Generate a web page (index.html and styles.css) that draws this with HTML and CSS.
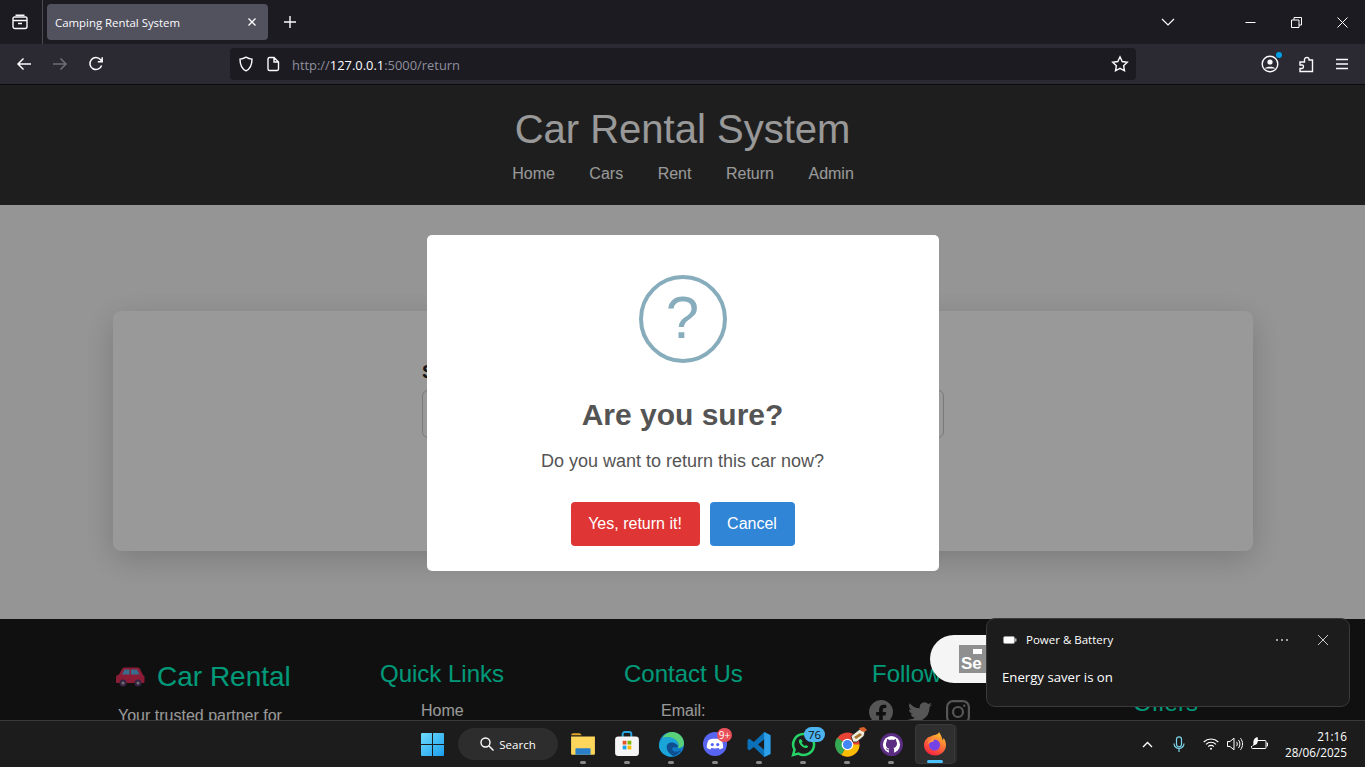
FILE: index.html
```html
<!DOCTYPE html>
<html lang="en">
<head>
    <meta charset="UTF-8">
    <meta name="viewport" content="width=device-width, initial-scale=1.0">
    <title>Camping Rental System</title>
    <link rel="stylesheet" href="styles.css">
</head>
<body>
    <div class="tabbar">
        <div class="tab-tools">
            <svg width="16" height="16" viewBox="0 0 16 16" fill="none" stroke="#fbfbfe" stroke-width="1.4"><path d="M3.5 1.2h9M1 4.5A1.5 1.5 0 0 1 2.500 3h11A1.500 1.500 0 0 1 15 4.500v8a2 2 0 0 1-2 2H3a2 2 0 0 1-2-2zM1 6.500h14M6 9.500h4"/></svg>
        </div>
        <div class="tab">
            <span class="tab-title">Camping Rental System</span>
            <svg width="10" height="10" viewBox="0 0 10 10" stroke="#fbfbfe" stroke-width="1.4"><path d="M1.500 1.500l7 7M8.500 1.500l-7 7"/></svg>
        </div>
        <div class="new-tab">
            <svg width="14" height="14" viewBox="0 0 14 14" stroke="#fbfbfe" stroke-width="1.4"><path d="M7 1v12M1 7h12"/></svg>
        </div>
        <div class="tab-spacer"></div>
        <div class="tab-list">
            <svg width="14" height="8" viewBox="0 0 14 8" fill="none" stroke="#fbfbfe" stroke-width="1.2"><path d="M1 1l6 6 6-6"/></svg>
        </div>
        <div class="win-btn">
            <svg width="11" height="11" viewBox="0 0 11 11" stroke="#fff" stroke-width="1"><path d="M0.500 5.500h10"/></svg>
        </div>
        <div class="win-btn">
            <svg width="11" height="11" viewBox="0 0 11 11" fill="none" stroke="#fff" stroke-width="1"><path d="M0.500 3h7.500v7.500h-7.500zM3 3V0.500h7.500V8H8"/></svg>
        </div>
        <div class="win-btn">
            <svg width="11" height="11" viewBox="0 0 11 11" stroke="#fff" stroke-width="1"><path d="M0.500 0.500l10 10M10.500 0.500l-10 10"/></svg>
        </div>
    </div>

    <div class="toolbar">
        <div class="nav-btns">
            <svg width="16" height="14" viewBox="0 0 16 14" fill="none" stroke="#fbfbfe" stroke-width="1.5"><path d="M15 7H2M7.500 1.500L2 7l5.500 5.500"/></svg>
            <svg width="16" height="14" viewBox="0 0 16 14" fill="none" stroke="#6f6e75" stroke-width="1.5"><path d="M1 7h13M8.500 1.500L14 7l-5.500 5.500"/></svg>
            <svg width="16" height="16" viewBox="0 0 16 16" fill="none" stroke="#fbfbfe" stroke-width="1.5"><path d="M13.600 9.500A6 6 0 1 1 12.600 3.800L14 5.500M14.200 1.200v4.500H9.800"/></svg>
        </div>
        <div class="urlbar">
            <svg width="16" height="16" viewBox="0 0 16 16" fill="none" stroke="#fbfbfe" stroke-width="1.4"><path d="M8 1.200c2 1.200 4 1.800 6 1.900 0 6-1.600 9.900-6 11.700C3.600 13 2 9.100 2 3.100c2-.1 4-.7 6-1.900z"/></svg>
            <svg width="14" height="16" viewBox="0 0 14 16" fill="none" stroke="#fbfbfe" stroke-width="1.4"><path d="M2 3a1.500 1.500 0 0 1 1.500-1.500H8L12.500 6v7a1.500 1.500 0 0 1-1.500 1.500H3.500A1.500 1.500 0 0 1 2 13zM8 1.500V6h4.500"/></svg>
            <span class="url"><span class="url-dim">http://</span><span class="url-host">127.0.0.1</span><span class="url-dim">:5000/return</span></span>
            <svg class="url-star" width="18" height="18" viewBox="0 0 18 18" fill="none" stroke="#fbfbfe" stroke-width="1.4"><path d="M9 1.800l2.200 4.700 5.100.7-3.700 3.500.9 5.100L9 13.400l-4.500 2.400.9-5.100L1.700 7.200l5.100-.7z"/></svg>
        </div>
        <div class="tool-icons">
            <div class="account">
                <svg width="18" height="18" viewBox="0 0 18 18" fill="none" stroke="#fbfbfe" stroke-width="1.4"><circle cx="9" cy="9" r="7.800"/><circle cx="9" cy="7" r="2.600" fill="#fbfbfe" stroke="none"/><path d="M3.800 13.500c1-2.200 9.400-2.200 10.400 0" fill="#fbfbfe" stroke="none"/></svg>
                <span class="account-dot"></span>
            </div>
            <svg width="16" height="17" viewBox="0 0 16 17" fill="none" stroke="#fbfbfe" stroke-width="1.4"><path d="M9 1.500c1.500 0 2.200 1 2 2.500h3.500v11.500H2v-3h2c2 0 2-3.500 0-3.500H2V6h4.500V3.500C6.500 2.200 7.500 1.500 9 1.500z"/></svg>
            <svg class="menu-icon" width="14" height="12" viewBox="0 0 14 12" stroke="#fbfbfe" stroke-width="1.3"><path d="M1 1.500h12M1 6h12M1 10.500h12"/></svg>
        </div>
    </div>

    <div class="page">
        <div class="navbar">
            <h1>Car Rental System</h1>
            <div class="nav-links">
                <a>Home</a>
                <a>Cars</a>
                <a>Rent</a>
                <a>Return</a>
                <a>Admin</a>
            </div>
        </div>

        <div class="main">
            <div class="return-card">
                <label class="return-label">Select Car</label>
                <div class="return-select"></div>
            </div>
        </div>

        <div class="footer">
            <div class="foot-brand">
                <h2 class="foot-logo">
                    <svg width="30" height="20" viewBox="0 0 30 20"><path fill="#e8305a" d="M1 10c0-1 1-2 3-2.500L7 2c.5-1 1.500-1.500 3-1.500h12c1.500 0 2.500.5 3 1.500l3 6c1 .5 1.500 1.500 1.500 2.500v4c0 1-.5 1.500-1.500 1.500H2c-.7 0-1-.5-1-1.500z"/><path fill="#62b4ea" d="M9.500 2.500h5v5h-7.500zM16 2.500h6l2.500 5H16z"/><circle cx="8" cy="16" r="3.500" fill="#5a3a6e"/><circle cx="23" cy="16" r="3.500" fill="#5a3a6e"/><circle cx="8" cy="16" r="1.500" fill="#bbb"/><circle cx="23" cy="16" r="1.500" fill="#bbb"/></svg>
                    <span>Car Rental</span>
                </h2>
                <p>Your trusted partner for</p>
            </div>
            <div class="foot-links">
                <h3>Quick Links</h3>
                <p>Home</p>
            </div>
            <div class="foot-contact">
                <h3>Contact Us</h3>
                <p>Email:</p>
            </div>
            <div class="foot-social">
                <h3>Follow Us</h3>
                <div class="social-icons">
                    <svg width="24" height="24" viewBox="0 0 24 24" fill="#8f8f8f"><path d="M24 12a12 12 0 1 0-13.900 11.900v-8.400H7.100V12h3V9.400c0-3 1.800-4.700 4.500-4.700 1.300 0 2.700.2 2.700.2v3h-1.500c-1.500 0-2 .9-2 1.900V12h3.300l-.5 3.500h-2.800v8.400A12 12 0 0 0 24 12z"/></svg>
                    <svg width="24" height="24" viewBox="0 0 24 24" fill="#8f8f8f"><path d="M24 4.600a9.800 9.800 0 0 1-2.800.8 4.900 4.900 0 0 0 2.100-2.700c-.9.600-2 1-3.100 1.200A4.900 4.900 0 0 0 11.800 8.300 14 14 0 0 1 1.700 3.200a4.900 4.900 0 0 0 1.500 6.600c-.8 0-1.600-.2-2.200-.6 0 2.400 1.700 4.400 3.900 4.900-.7.200-1.500.2-2.200.1a4.900 4.900 0 0 0 4.600 3.400A9.900 9.900 0 0 1 0 19.500a14 14 0 0 0 21.500-12.400c1-.7 1.800-1.600 2.500-2.500z"/></svg>
                    <svg width="24" height="24" viewBox="0 0 24 24" fill="none" stroke="#8f8f8f" stroke-width="2.200"><rect x="1.100" y="1.100" width="21.800" height="21.800" rx="6"/><circle cx="12" cy="12" r="5"/><circle cx="18.300" cy="5.700" r="1.200" fill="#8f8f8f" stroke="none"/></svg>
                </div>
            </div>
            <div class="foot-offers">
                <h3>Offers</h3>
            </div>
        </div>

        <div class="overlay">
            <div class="modal">
                <div class="modal-icon">?</div>
                <h2>Are you sure?</h2>
                <p>Do you want to return this car now?</p>
                <div class="modal-actions">
                    <button class="btn-yes">Yes, return it!</button>
                    <button class="btn-cancel">Cancel</button>
                </div>
            </div>
        </div>

        <div class="se-pill"><span class="se-box"><span class="se-cam"></span>Se</span></div>

        <div class="toast">
            <div class="toast-head">
                <svg width="14" height="8" viewBox="0 0 14 8"><rect x="0.500" y="0.500" width="11" height="7" rx="1.500" fill="#fff" stroke="#999"/><rect x="12" y="2.500" width="1.500" height="3" fill="#bbb"/></svg>
                <span class="toast-app">Power &amp; Battery</span>
                <span class="toast-more">
                    <i></i><i></i><i></i>
                </span>
                <svg width="10" height="10" viewBox="0 0 10 10" stroke="#ccc" stroke-width="1"><path d="M0 0l10 10M10 0L0 10"/></svg>
            </div>
            <div class="toast-body">Energy saver is on</div>
        </div>
    </div>

    <div class="taskbar">
        <div class="task-center">
            <svg class="task-win" width="23" height="23" viewBox="0 0 22 22"><defs><linearGradient id="wg" x1="0" y1="0" x2="1" y2="1"><stop offset="0" stop-color="#6fdcfb"/><stop offset="1" stop-color="#1a9ff0"/></linearGradient></defs><path fill="url(#wg)" d="M0 1a1 1 0 0 1 1-1h9.500v10.500H0zM11.500 0H21a1 1 0 0 1 1 1v9.500H11.500zM0 11.500h10.500V22H1a1 1 0 0 1-1-1zM11.500 11.500H22V21a1 1 0 0 1-1 1h-9.500z"/></svg>
            <div class="task-search">
                <svg width="14" height="14" viewBox="0 0 14 14" fill="none" stroke="#fff" stroke-width="1.4"><circle cx="5.500" cy="5.500" r="4.500"/><path d="M9 9l4.500 4.500"/></svg>
                <span>Search</span>
            </div>
            <div class="task-app">
                <svg width="26" height="24" viewBox="0 0 24 22"><path fill="#e0a526" d="M1 3a2 2 0 0 1 2-2h6l2 2h-10z"/><path fill="#ffd65c" d="M1 4h22v16a1 1 0 0 1-1 1H2a1 1 0 0 1-1-1z"/><path fill="#2a7fc9" d="M6 15h12a1 1 0 0 1 1 1v5H5v-5a1 1 0 0 1 1-1z"/></svg>
            </div>
            <div class="task-app">
                <svg width="24" height="26" viewBox="0 0 22 24"><path fill="none" stroke="#27a6e0" stroke-width="1.800" d="M7 6V3a2 2 0 0 1 2-2h4a2 2 0 0 1 2 2v3"/><rect y="5" width="22" height="18" rx="3" fill="#f5f5f5"/><rect x="7" y="9" width="3.500" height="3.500" fill="#e8542c"/><rect x="11.500" y="9" width="3.500" height="3.500" fill="#7db900"/><rect x="7" y="13.500" width="3.500" height="3.500" fill="#1ea3e8"/><rect x="11.500" y="13.500" width="3.500" height="3.500" fill="#fdb900"/></svg>
            </div>
            <div class="task-app">
                <svg width="25" height="25" viewBox="0 0 24 24"><circle cx="12" cy="12" r="12" fill="#0f7cc8"/><path fill="#5ad07a" d="M3 6C6 1 10 0 13 0c6 0 11 5 11 11 0 3-3 5-6 4 1-1 1-3 0-5C15 5 8 4 3 6z"/><path fill="#1ba4d8" d="M3 6c5-2 12-1 15 4 .6 1.200.7 2.400.3 3.400-2.300-3.400-6.300-4.400-9.300-2.400C6 13 7 20 14 23c-7 2-13-3-14-9 0-3 1-6 3-8z"/><path fill="#0f4f8f" d="M9 11c3-2 7-1 9.300 2.400-.3 1-1 1.400-1.800 1.600-3-1-5 1-3 3 2 1.500 5 1 8-1-2 3-5 5.500-7.500 6C7 20 6 13 9 11z"/></svg>
            </div>
            <div class="task-app">
                <svg width="24" height="24" viewBox="0 0 22 22"><circle cx="11" cy="11" r="11" fill="#5865f2"/><path fill="#fff" d="M5 7.500c3-1.800 9-1.800 12 0 1.200 2.300 1.600 4.600 1.500 7-1.200.9-2.300 1.300-3.200 1.500l-.9-1.400c-2.200.6-4.600.6-6.800 0l-.9 1.400c-1-.2-2-.6-3.200-1.500-.1-2.400.3-4.700 1.500-7z"/><circle cx="8.500" cy="11.500" r="1.500" fill="#5865f2"/><circle cx="13.500" cy="11.500" r="1.500" fill="#5865f2"/></svg>
                <span class="task-badge badge-red">9+</span>
            </div>
            <div class="task-app">
                <svg width="24" height="25" viewBox="0 0 22 24"><path fill="#0a70b8" d="M16 0l6 3v18l-6 3-10-9.500-4 3L0 16.500v-9L2 6.500l4 3zM16 7l-6 5 6 5z"/><path fill="#2ea0ea" d="M16 0l6 3v18l-6 3z"/></svg>
            </div>
            <div class="task-app">
                <svg width="25" height="25" viewBox="0 0 24 24" fill="none"><path stroke="#25d366" stroke-width="2.400" d="M12 2a10 10 0 0 0-8.600 15L2 22l5.200-1.300A10 10 0 1 0 12 2z"/><path fill="#25d366" d="M8.500 7c-1 .8-1.200 2-.5 3.500 1 2.200 3 4 5.400 4.800 1.500.4 2.700-.2 3.300-1.300l-2.300-1.600-1 1c-1.400-.6-2.500-1.700-3.200-3l1-1L9.800 7z"/></svg>
                <span class="task-badge badge-blue">76</span>
            </div>
            <div class="task-app">
                <svg width="25" height="25" viewBox="0 0 24 24"><circle cx="12" cy="12" r="11.500" fill="#ea4335"/><path fill="#fbbc05" d="M12 12h11.500a11.500 11.500 0 0 1-17.300 10z"/><path fill="#34a853" d="M12 12L6.200 22A11.500 11.500 0 0 1 2 5.500z"/><circle cx="12" cy="12" r="5.600" fill="#fff"/><circle cx="12" cy="12" r="4.400" fill="#4285f4"/></svg>
                <svg class="chrome-mark" width="17" height="16" viewBox="0 0 17 16"><path fill="#f0ece0" stroke="#222" stroke-width="0.800" d="M1 9l9-7 5 2-1 5-7 6H3z"/><path fill="#d9622b" d="M9 1l5-1 3 3-3 2-3-1z"/><path fill="#a8752a" d="M4 10l6-4 2 2-6 4z"/></svg>
            </div>
            <div class="task-app">
                <svg width="23" height="23" viewBox="0 0 22 22"><circle cx="11" cy="11" r="11" fill="#5a2d82"/><circle cx="11" cy="11" r="8.200" fill="#fff"/><path fill="#5a2d82" d="M7 5.500l2 1.300c1.300-.3 2.700-.3 4 0l2-1.300.6 2.500c1 1.300 1 4-.6 5.300-.6.500-1.300.8-2.200.9.500.4.700 1 .7 1.800v3.500a8.500 8.500 0 0 1-5 0V16.500c-1.600.4-2.500-.4-3-1.800l1.500.6c.4.500 1 .6 1.600.4 0-.3.100-.6.400-.8-.9-.1-1.600-.4-2.200-.9C5.400 12.800 5.400 10 6.400 8z"/></svg>
            </div>
            <div class="task-app task-active">
                <svg width="24" height="24" viewBox="0 0 24 24"><defs><linearGradient id="fx" x1="0.800" y1="0" x2="0.300" y2="1"><stop offset="0" stop-color="#ffcb2d"/><stop offset="0.500" stop-color="#ff7139"/><stop offset="1" stop-color="#f5213f"/></linearGradient></defs><path fill="url(#fx)" d="M12 3c-1 0-3 .5-4 1.500C6 4.800 4.500 5.500 4 6.500 2 8 1 10 1 13c0 6 5 10.500 11 10.500S23 19 23 13c0-2.500-.8-5-2.500-7-.1 1-.4 1.800-1 2.400C19 5 17.500 2 16 0c-.2 2-2.500 2.500-4 3z"/><circle cx="11.500" cy="13" r="5.500" fill="#7542e5"/><path fill="#ff9640" d="M5 12c0-3 3-5.500 7-5.500-1 1-1.500 2-1.500 3-2 0-3.500 1-5.500 2.500z"/></svg>
                <span class="active-bar"></span>
            </div>
        </div>
        <div class="tray">
            <svg width="11" height="7" viewBox="0 0 11 7" fill="none" stroke="#fff" stroke-width="1.4"><path d="M1 6l4.500-4.500L10 6"/></svg>
            <svg class="tray-mic" width="12" height="17" viewBox="0 0 12 17" fill="none" stroke="#7ed4ea" stroke-width="1.2"><rect x="3.500" y="0.800" width="5" height="10" rx="2.500"/><path d="M1 7.500a5 5 0 0 0 10 0M6 12.500V16"/></svg>
            <svg class="tray-wifi" width="16" height="12" viewBox="0 0 16 12" fill="none" stroke="#fff" stroke-width="1.1"><path d="M0.700 4a10.500 10.500 0 0 1 14.600 0M3 6.400a7 7 0 0 1 10 0M5.200 8.600a3.800 3.800 0 0 1 5.600 0"/><circle cx="8" cy="10.700" r="1" fill="#fff" stroke="none"/></svg>
            <svg class="tray-vol" width="16" height="14" viewBox="0 0 16 14" fill="none" stroke="#fff" stroke-width="1"><path d="M0.500 4.500h2.500L7 1.200v11.600L3 9.500H.5zM9.500 4.800c1 1.300 1 3.100 0 4.400M11.500 3c1.900 2.400 1.900 5.600 0 8M13.500 1.200c2.700 3.500 2.700 8.100 0 11.600"/></svg>
            <svg class="tray-batt" width="17" height="14" viewBox="0 0 17 14" fill="none" stroke="#fff" stroke-width="1"><path d="M6 3.500h8a1 1 0 0 1 1 1v6a1 1 0 0 1-1 1H1.500a1 1 0 0 1-1-1V9M15.500 6h1v3h-1"/><path fill="#fff" stroke="none" d="M6.500 0C3 1 2 4 2.500 7L1 9.500 3.500 8c3-.2 4-4 3-8z"/></svg>
            <div class="clock">
                <span>21:16</span>
                <span>28/06/2025</span>
            </div>
        </div>
    </div>
</body>
</html>
```

FILE: styles.css
```css
html, body {
    margin: 0;
    padding: 0;
    height: 767px;
    overflow: hidden;
}
body {
    font-family: "Liberation Sans", Arial, sans-serif;
    display: flex;
    flex-direction: column;
    background: #1c1b22;
}
svg {
    display: block;
    flex: none;
}

/* browser chrome */
.tabbar {
    height: 44px;
    background: #1c1b22;
    display: flex;
    align-items: center;
    flex: none;
}
.tab-tools {
    width: 43px;
    height: 44px;
    box-sizing: border-box;
    border-right: 1px solid #4a4a50;
    display: flex;
    align-items: center;
    justify-content: center;
    padding-right: 3px;
}
.tab {
    width: 221px;
    height: 36px;
    margin-left: 4px;
    box-sizing: border-box;
    padding: 0 11px 0 8px;
    background: #52525e;
    border-radius: 4px;
    display: flex;
    align-items: center;
    justify-content: space-between;
}
.tab-title {
    font-family: "Open Sans", sans-serif;
    font-size: 11.4px;
    color: #fbfbfe;
}
.new-tab {
    margin-left: 15px;
}
.tab-spacer {
    flex: 1;
}
.tab-list {
    margin-right: 52px;
}
.win-btn {
    width: 46px;
    display: flex;
    justify-content: center;
}
.toolbar {
    height: 40px;
    background: #2b2a33;
    border-bottom: 1px solid #0c0c0d;
    display: flex;
    align-items: center;
    flex: none;
}
.nav-btns {
    width: 230px;
    box-sizing: border-box;
    padding-left: 16px;
    display: flex;
    align-items: center;
    gap: 20px;
}
.urlbar {
    width: 906px;
    height: 32px;
    box-sizing: border-box;
    padding: 0 7px 0 8px;
    background: #1c1b22;
    border-radius: 4px;
    display: flex;
    align-items: center;
    gap: 12px;
}
.url {
    font-family: "Open Sans", sans-serif;
    font-size: 12.9px;
    position: relative;
    top: 1px;
}
.url-dim {
    color: #8f8f9d;
}
.url-host {
    color: #fbfbfe;
}
.url-star {
    margin-left: auto;
}
.tool-icons {
    flex: 1;
    display: flex;
    align-items: center;
    gap: 19px;
    padding-left: 125px;
}
.menu-icon {
    margin-left: 2px;
}
.account {
    position: relative;
}
.account-dot {
    position: absolute;
    top: -3px;
    right: -3px;
    width: 6px;
    height: 6px;
    border-radius: 50%;
    background: #00a0e8;
}

/* the rental page */
.page {
    height: 635px;
    flex: none;
    position: relative;
    overflow: hidden;
    display: flex;
    flex-direction: column;
    background: #fafafa;
}
.navbar {
    height: 120px;
    flex: none;
    background: #333;
    text-align: center;
    box-sizing: border-box;
    padding-top: 20px;
}
.navbar h1 {
    margin: 0;
    font-size: 40px;
    line-height: 48px;
    font-weight: normal;
    color: #fff;
}
.nav-links {
    margin-top: 12px;
    padding-left: 1px;
    display: flex;
    justify-content: center;
    gap: 34.5px;
    color: #fff;
    font-size: 16px;
    line-height: 18px;
}
.main {
    height: 414px;
    flex: none;
    box-sizing: border-box;
    padding: 106px 112px 0 113px;
    background: #f9f9f9;
}
.return-card {
    height: 240px;
    box-sizing: border-box;
    background: #fff;
    border-radius: 8px;
    box-shadow: 0 8px 32px rgba(0, 0, 0, 0.18);
    padding: 50px 309px 0;
}
.return-label {
    display: block;
    font-size: 19px;
    font-weight: bold;
    color: #222;
    line-height: 22px;
}
.return-select {
    margin-top: 7px;
    height: 46px;
    border: 1px solid #ccc;
    border-radius: 6px;
}
.footer {
    flex: 1;
    background: #1c1c1c;
    display: flex;
    padding-top: 41px;
    color: #fff;
    font-size: 16px;
}
.footer h3 {
    margin: 0;
    font-size: 24px;
    line-height: 28px;
    font-weight: normal;
    color: #00ffcc;
}
.footer p {
    margin: 0;
    line-height: 18px;
}
.foot-brand {
    width: 265px;
    margin-left: 115px;
}
.foot-logo {
    margin: 1px 0 0;
    display: flex;
    align-items: center;
    gap: 12px;
    font-size: 28px;
    line-height: 32px;
    font-weight: normal;
    color: #00ffcc;
}
.foot-brand p {
    margin: 14px 0 0 3px;
}
.foot-links {
    width: 244px;
    flex: none;
}
.foot-links p {
    margin: 14px 0 0 41px;
}
.foot-contact {
    width: 248px;
    flex: none;
}
.foot-contact p {
    margin: 14px 0 0 37px;
}
.foot-social {
    width: 263px;
    flex: none;
    white-space: nowrap;
}
.social-icons {
    display: flex;
    gap: 14.5px;
    margin: 12px 0 0 -3px;
}
.foot-offers {
    padding-top: 29px;
    margin-left: -2px;
}

/* dialog */
.overlay {
    position: absolute;
    left: 0;
    right: 0;
    top: 0;
    bottom: 0;
    background: rgba(0, 0, 0, 0.4);
    display: flex;
    justify-content: center;
    align-items: flex-start;
}
.modal {
    width: 512px;
    height: 336px;
    margin-top: 150px;
    box-sizing: border-box;
    padding-top: 40px;
    background: #fff;
    border-radius: 5px;
    text-align: center;
}
.modal-icon {
    width: 88px;
    height: 88px;
    box-sizing: border-box;
    margin: 0 auto;
    border: 4px solid #87adbd;
    border-radius: 50%;
    color: #87adbd;
    font-size: 60px;
    line-height: 77px;
}
.modal h2 {
    margin: 29px 0 0;
    font-size: 30px;
    line-height: 46px;
    color: #545454;
}
.modal p {
    margin: 10px 0 0;
    font-size: 18px;
    line-height: 26px;
    color: #545454;
}
.modal-actions {
    margin-top: 28px;
    display: flex;
    justify-content: center;
    gap: 10px;
}
.modal-actions button {
    height: 44px;
    border: none;
    border-radius: 4px;
    padding: 0;
    font-family: inherit;
    font-size: 16px;
    color: #fff;
}
.btn-yes {
    width: 129px;
    background: #e03535;
}
.btn-cancel {
    width: 85px;
    background: #3085d6;
}

/* recorder pill, sits over the dialog backdrop */
.se-pill {
    position: absolute;
    left: 930px;
    top: 550px;
    width: 120px;
    height: 48px;
    border-radius: 24px;
    background: #f5f5f5;
    box-sizing: border-box;
    padding: 10px 0 0 29px;
}
.se-box {
    display: block;
    position: relative;
    width: 40px;
    height: 28px;
    background: #8f8f8f;
    color: #fff;
    font-weight: bold;
    font-size: 17px;
    line-height: 38px;
    overflow: hidden;
    padding-left: 2px;
    box-sizing: border-box;
}
.se-cam {
    position: absolute;
    top: 4px;
    left: 14px;
    width: 9px;
    height: 5px;
    background: #fff;
}

/* windows notification */
.toast {
    position: absolute;
    left: 986px;
    top: 533px;
    width: 364px;
    height: 89px;
    box-sizing: border-box;
    padding: 0 21px 0 15px;
    background: #1c1c1c;
    border: 1px solid #3a3a3a;
    border-radius: 9px;
    font-family: "Open Sans", sans-serif;
    color: #fff;
}
.toast-head {
    display: flex;
    align-items: center;
    height: 41px;
    font-size: 11.5px;
}
.toast-head svg:first-child {
    margin-left: 1px;
}
.toast-app {
    margin-left: 9px;
}
.toast-more {
    margin-left: auto;
    margin-right: 30px;
    display: flex;
    gap: 3px;
}
.toast-more i {
    width: 2px;
    height: 2px;
    border-radius: 50%;
    background: #ccc;
}
.toast-body {
    margin-top: 8px;
    font-size: 13.2px;
}

/* taskbar */
.taskbar {
    height: 47px;
    flex: none;
    box-sizing: border-box;
    border-top: 1px solid #3a3a3a;
    background: #1c1c1c;
    position: relative;
    display: flex;
    align-items: center;
}
.task-center {
    margin-left: 421px;
    display: flex;
    align-items: center;
}
.task-win {
    margin-right: 14px;
}
.task-search {
    width: 100px;
    height: 32px;
    border-radius: 16px;
    background: #2d2d2d;
    display: flex;
    align-items: center;
    justify-content: center;
    gap: 5px;
    margin-right: 3px;
    color: #fff;
    font-family: "Open Sans", sans-serif;
    font-size: 11.5px;
}
.task-app {
    width: 44px;
    height: 46px;
    position: relative;
    display: flex;
    align-items: center;
    justify-content: center;
}
.task-app::after {
    content: "";
    position: absolute;
    bottom: 3px;
    left: 19px;
    width: 6px;
    height: 3px;
    border-radius: 2px;
    background: #8a8a8a;
}
.task-active {
    width: 40px;
    height: 40px;
    background: #2f2f2f;
    border: 1px solid #3a3a3a;
    border-radius: 4px;
    box-sizing: border-box;
    margin-left: 2px;
    box-shadow: 3px 0 0 -1px #2a2a2a;
}
.task-active::after {
    display: none;
}
.active-bar {
    position: absolute;
    bottom: 0;
    left: 11px;
    width: 16px;
    height: 3px;
    border-radius: 2px;
    background: #4cc2ff;
}
.task-badge {
    position: absolute;
    border-radius: 8px;
    font-family: "Open Sans", sans-serif;
    text-align: center;
}
.badge-red {
    top: 7px;
    left: 24px;
    width: 15px;
    height: 14px;
    background: #e8505a;
    color: #fff;
    font-size: 10px;
    line-height: 14px;
}
.badge-blue {
    top: 6px;
    left: 23px;
    width: 21px;
    height: 15px;
    background: #4cb4f0;
    color: #111;
    font-size: 11.5px;
    line-height: 15px;
}
.chrome-mark {
    position: absolute;
    top: 6px;
    left: 25px;
}
.tray {
    position: absolute;
    right: 18px;
    top: 0;
    bottom: 0;
    display: flex;
    align-items: center;
    color: #fff;
}
.tray-mic {
    margin-left: 20px;
}
.tray-wifi {
    margin-left: 18px;
}
.tray-vol {
    margin-left: 8px;
}
.tray-batt {
    margin-left: 8px;
}
.clock {
    margin-left: 17px;
    display: flex;
    flex-direction: column;
    align-items: flex-end;
    font-family: "Open Sans", sans-serif;
    font-size: 11.7px;
    line-height: 16px;
}
```
